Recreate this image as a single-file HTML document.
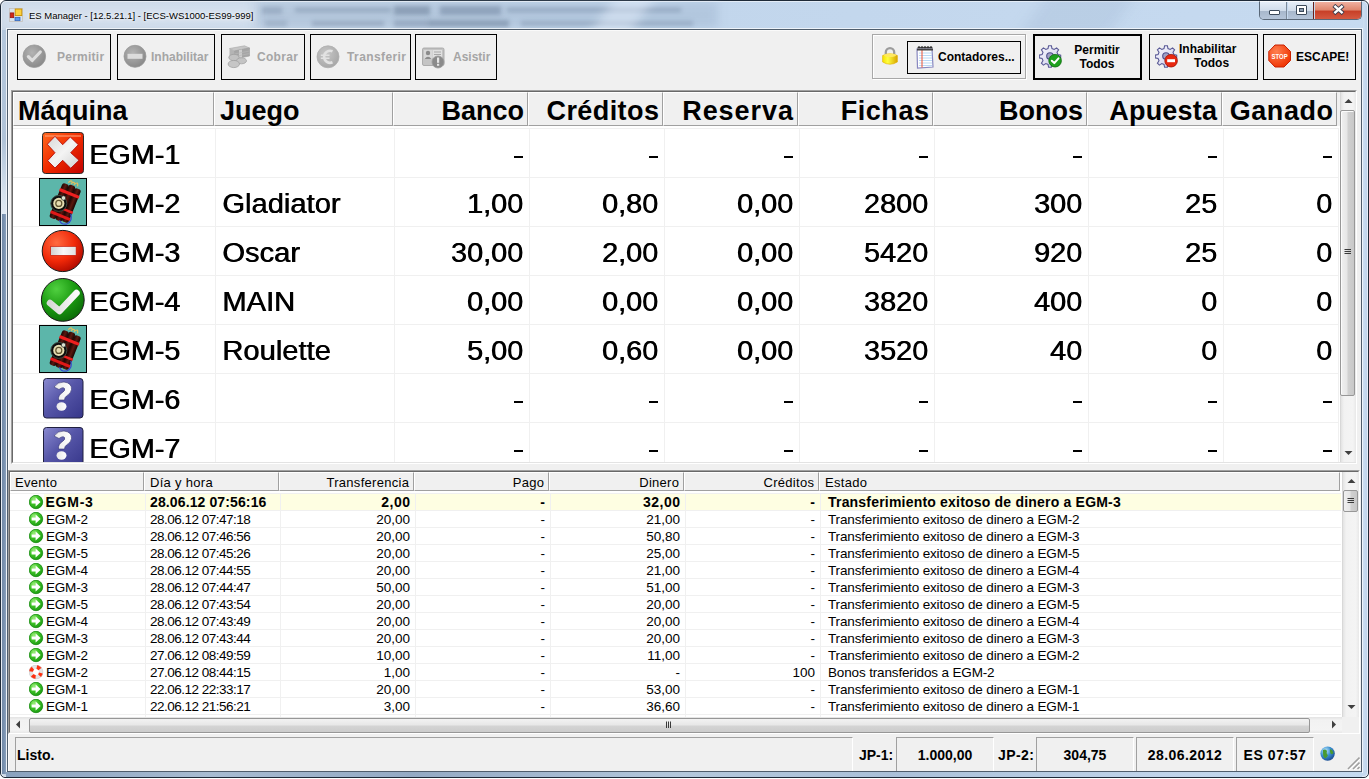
<!DOCTYPE html><html><head><meta charset="utf-8"><title>ES Manager</title><style>
*{margin:0;padding:0;box-sizing:border-box}
html,body{width:1369px;height:779px;overflow:hidden;background:#fff}
body{position:relative;font-family:"Liberation Sans",sans-serif;color:#000}
div,span,svg{position:absolute}
.t{white-space:nowrap;line-height:1}
</style></head><body>
<div style="left:0;top:0;width:1369px;height:778px;border:1px solid #1e2a38;border-radius:6px 6px 5px 5px;background:linear-gradient(90deg,#c8d6e6 0%,#c6d6e8 18%,#c2d6ec 50%,#c6daf0 100%)"></div>
<div style="left:258px;top:2px;width:460px;height:26px;background:rgba(150,172,198,.35);filter:blur(4px)"></div>
<div style="left:262px;top:7px;width:20px;height:7px;background:rgba(50,70,100,0.2);filter:blur(2px)"></div>
<div style="left:295px;top:8px;width:96px;height:4px;background:rgba(50,70,100,0.25);filter:blur(2px)"></div>
<div style="left:394px;top:6px;width:36px;height:9px;background:rgba(50,70,100,0.3);filter:blur(2px)"></div>
<div style="left:440px;top:6px;width:61px;height:9px;background:rgba(50,70,100,0.28);filter:blur(2px)"></div>
<div style="left:507px;top:8px;width:174px;height:4px;background:rgba(50,70,100,0.25);filter:blur(2px)"></div>
<div style="left:265px;top:20px;width:22px;height:7px;background:rgba(50,70,100,0.15);filter:blur(2px)"></div>
<div style="left:312px;top:21px;width:72px;height:5px;background:rgba(50,70,100,0.22);filter:blur(2px)"></div>
<div style="left:394px;top:20px;width:34px;height:7px;background:rgba(50,70,100,0.22);filter:blur(2px)"></div>
<div style="left:428px;top:20px;width:81px;height:7px;background:rgba(50,70,100,0.3);filter:blur(2px)"></div>
<div style="left:521px;top:21px;width:172px;height:5px;background:rgba(50,70,100,0.2);filter:blur(2px)"></div>
<div style="left:1px;top:1px;width:1367px;height:776px;border:1px solid rgba(255,255,255,.55);border-radius:5px 5px 4px 4px;"></div>
<div style="left:6px;top:28px;width:1357px;height:745px;border:1px solid rgba(255,255,255,.7);"></div>
<div style="left:2px;top:30px;width:4px;height:184px;background:linear-gradient(180deg,#b4c7dc 0%,#b0c3d8 60%,#d4e0ec 88%,#e0e9f2 100%);"></div>
<div style="left:2px;top:214px;width:4px;height:560px;background:linear-gradient(90deg,#7088a6,#7c94b2 60%,#8aa2be);"></div>
<div style="left:6px;top:772px;width:1356px;height:5px;background:linear-gradient(90deg,#8aa2be,#a8bcd2 15%,#94aac4 30%,#b4c8dc 50%,#aac0d8 65%,#c0d4ea 85%,#c4daf0 100%);"></div>
<div style="left:1363px;top:6px;width:4px;height:766px;background:linear-gradient(90deg,rgba(255,255,255,.1),rgba(150,175,205,.15));"></div>
<div style="left:2px;top:1px;width:1365px;height:27px;overflow:hidden"><div style="left:600px;top:-10px;width:40px;height:50px;background:rgba(235,245,255,.45);filter:blur(6px);transform:skewX(-35deg)"></div><div style="left:1030px;top:-10px;width:90px;height:50px;background:rgba(150,175,205,.25);filter:blur(8px);transform:skewX(-35deg)"></div><div style="left:0px;top:0px;width:250px;height:27px;background:rgba(235,242,250,.35);filter:blur(6px)"></div></div>
<div style="left:7px;top:29px;width:1355px;height:743px;background:#f0f0f0;border:1px solid #4f5d6c;"></div>
<div style="left:8px;top:30px;width:1353px;height:1px;background:#fafafa"></div>
<div style="left:8px;top:30px;width:1px;height:741px;background:#fafafa"></div>
<svg style="left:9px;top:8px" width="14" height="14" viewBox="0 0 14 14">
<rect x="0.5" y="0.5" width="13" height="13" fill="rgba(220,230,240,.6)" stroke="rgba(190,180,170,.7)" stroke-width="0.8"/>
<rect x="6.2" y="1" width="6.6" height="6.6" fill="#fbd040" stroke="#c89000" stroke-width="0.9"/>
<rect x="1.2" y="4.9" width="3.6" height="4.8" fill="#d02818" stroke="#901010" stroke-width="0.7"/>
<rect x="6" y="9.3" width="5" height="3.4" fill="#5a9af0" stroke="#2a5cb0" stroke-width="0.7"/>
</svg>
<div class="t" style="left:29px;top:11px;font-size:9.5px;color:#000;text-shadow:0 0 6px #fff,0 0 3px #fff">ES Manager - [12.5.21.1] - [ECS-WS1000-ES99-999]</div>
<div style="left:1259px;top:1px;width:103px;height:19px;border:1px solid #5a6878;border-top:1px solid rgba(255,255,255,.8);border-radius:0 0 5px 5px;overflow:hidden">
<div style="left:0;top:0;width:27px;height:19px;background:linear-gradient(180deg,#e6eef8 0%,#d0dcea 45%,#a8b8cc 50%,#b8c8dc 100%);border-right:1px solid #7c8a9a"></div>
<div style="left:28px;top:0;width:26px;height:19px;background:linear-gradient(180deg,#e6eef8 0%,#d0dcea 45%,#a8b8cc 50%,#b8c8dc 100%);border-right:1px solid #6a2018"></div>
<div style="left:55px;top:0;width:47px;height:19px;background:linear-gradient(180deg,#f0b0a0 0%,#e08870 40%,#c84028 50%,#d86048 100%)"></div>
</div>
<div style="left:1269px;top:10px;width:11px;height:5px;background:#fff;border:1px solid #3c4a5a;border-radius:1px"></div>
<div style="left:1296px;top:5px;width:11px;height:10px;background:#fff;border:1px solid #3c4a5a;border-radius:1px"></div>
<div style="left:1299px;top:8px;width:5px;height:4px;background:#8a9aae;border:1px solid #3c4a5a"></div>
<svg style="left:1332px;top:4px" width="14" height="12" viewBox="0 0 14 12">
<path d="M1.8 1.4 L11.2 9.6 M11.2 1.4 L1.8 9.6" stroke="#3c3c4c" stroke-width="4.2" stroke-linecap="butt"/>
<path d="M2.4 1.9 L10.6 9.1 M10.6 1.9 L2.4 9.1" stroke="#fff" stroke-width="2.5" stroke-linecap="butt"/>
</svg>
<div style="left:17px;top:34px;width:94px;height:46px;border:1px solid #000;background:#f0f0f0;"></div>
<div style="left:117px;top:34px;width:98px;height:46px;border:1px solid #000;background:#f0f0f0;"></div>
<div style="left:221px;top:34px;width:84px;height:46px;border:1px solid #000;background:#f0f0f0;"></div>
<div style="left:310px;top:34px;width:101px;height:46px;border:1px solid #000;background:#f0f0f0;"></div>
<div style="left:415px;top:34px;width:82px;height:46px;border:1px solid #000;background:#f0f0f0;"></div>
<div class="t" style="left:57px;top:51px;color:#a5a5a5;font-weight:bold;font-size:12px;letter-spacing:0.25px">Permitir</div>
<div class="t" style="left:151px;top:51px;color:#a5a5a5;font-weight:bold;font-size:12px">Inhabilitar</div>
<div class="t" style="left:257px;top:51px;color:#a5a5a5;font-weight:bold;font-size:12px;letter-spacing:0.3px">Cobrar</div>
<div class="t" style="left:347px;top:51px;color:#a5a5a5;font-weight:bold;font-size:12px;letter-spacing:0.4px">Transferir</div>
<div class="t" style="left:453px;top:51px;color:#a5a5a5;font-weight:bold;font-size:12px">Asistir</div>
<svg style="left:22px;top:44px" width="26" height="26" viewBox="0 0 26 26">
<defs><radialGradient id="gg" cx="40%" cy="35%" r="65%"><stop offset="0" stop-color="#b4b4b4"/><stop offset="1" stop-color="#8a8a8a"/></radialGradient></defs>
<circle cx="12.3" cy="12.2" r="11.3" fill="url(#gg)" stroke="#9a9a9a" stroke-width="0.8"/>
<path d="M6.4 12.6 L10.2 16.5 L18.3 8" fill="none" stroke="#dedede" stroke-width="3.2" stroke-linecap="round" stroke-linejoin="round"/>
</svg>
<svg style="left:123px;top:44px" width="26" height="26" viewBox="0 0 26 26">
<circle cx="12" cy="12.3" r="11" fill="url(#gg)" stroke="#9a9a9a" stroke-width="0.8"/>
<rect x="4.5" y="9.8" width="15" height="5" fill="#dcdcdc"/>
</svg>
<svg style="left:226px;top:44px" width="26" height="26" viewBox="0 0 26 26">
<path d="M3.5 4.5 L18.5 1.8 L23.5 4 L8.5 7 Z" fill="#c6c6c6" stroke="#a8a8a8" stroke-width=".6"/>
<path d="M3.5 4.5 L8.5 7 L8.5 15 L3.5 12.5 Z" fill="#b4b4b4"/>
<path d="M8.5 7 L23.5 4 L23.5 12 L8.5 15 Z" fill="#a6a6a6" stroke="#9c9c9c" stroke-width=".6"/>
<path d="M13 6.1 L16 5.5 L16 13.5 L13 14.1 Z" fill="#cdcdcd"/>
<path d="M8.5 10 L23.5 7 M8.5 12.5 L23.5 9.5" stroke="#b8b8b8" stroke-width=".7"/>
<ellipse cx="8" cy="13.5" rx="5.2" ry="3.2" fill="#c2c2c2" stroke="#a0a0a0" stroke-width=".8"/>
<ellipse cx="15.5" cy="16.8" rx="5" ry="3" fill="#c4c4c4" stroke="#a4a4a4" stroke-width=".8"/>
<ellipse cx="7.8" cy="20" rx="5.7" ry="3.6" fill="#c6c6c6" stroke="#a2a2a2" stroke-width=".8"/>
</svg>
<svg style="left:315px;top:44px" width="26" height="26" viewBox="0 0 26 26">
<defs><radialGradient id="ge" cx="40%" cy="35%" r="65%"><stop offset="0" stop-color="#c8c8c8"/><stop offset="1" stop-color="#a8a8a8"/></radialGradient></defs>
<circle cx="13" cy="12.8" r="11" fill="url(#ge)" stroke="#b0b0b0" stroke-width="0.8"/>
<path d="M17.5 7.3 A6 6 0 1 0 17.5 18.3" fill="none" stroke="#e2e2e2" stroke-width="2.6"/>
<path d="M5.8 11.3 H14.5 M5.8 14.3 H14.5" stroke="#e2e2e2" stroke-width="1.6"/>
</svg>
<svg style="left:420px;top:44px" width="28" height="26" viewBox="0 0 28 26">
<rect x="2.5" y="4" width="21.5" height="17.5" rx="1.5" fill="#c4c4c4" stroke="#a0a0a0" stroke-width="0.8"/>
<rect x="4" y="6" width="8" height="9" fill="#d8d8d8"/>
<circle cx="8" cy="9" r="2.2" fill="#8c8c8c"/>
<path d="M4.5 15 Q8 10.5 11.5 15 Z" fill="#8c8c8c"/>
<rect x="12.5" y="6" width="9.5" height="8" fill="#e0e0e0"/>
<path d="M14 8 H21 M14 10.5 H21" stroke="#a8a8a8" stroke-width="1"/>
<circle cx="18" cy="18" r="6" fill="#8a8a8a" stroke="#9c9c9c" stroke-width="0.8"/>
<rect x="17" y="13.5" width="2.2" height="5.3" fill="#e6e6e6"/>
<rect x="17" y="19.8" width="2.2" height="2" fill="#e6e6e6"/>
</svg>
<div style="left:872px;top:34px;width:154px;height:45px;border:1px solid #a8a8a8;box-shadow:inset 1px 1px 0 #fff, 1px 1px 0 #fff;"></div>
<div style="left:907px;top:41px;width:114px;height:33px;border:1px solid #000;background:#f0f0f0;"></div>
<div class="t" style="left:938px;top:51px;color:#000;font-weight:bold;font-size:12px">Contadores...</div>
<svg style="left:880px;top:45px" width="20" height="22" viewBox="0 0 20 22">
<defs><linearGradient id="lk" x1="0" x2="1"><stop offset="0" stop-color="#f4e000"/><stop offset=".35" stop-color="#ffff40"/><stop offset="1" stop-color="#d8a400"/></linearGradient></defs>
<path d="M5.8 9.5 V7.3 A4.2 4.2 0 0 1 14.2 7.3 V9.5" fill="none" stroke="#9c9c9c" stroke-width="2.3"/>
<path d="M2.6 10.5 Q10 7 17.4 10.5 V17 Q10 21.5 2.6 17 Z" fill="url(#lk)" stroke="#e0b000" stroke-width="0.6"/>
<ellipse cx="10" cy="10.2" rx="6" ry="1.8" fill="#ffe860"/>
</svg>
<svg style="left:915px;top:46px" width="20" height="24" viewBox="0 0 20 24">
<path d="M2 3 L17 3 L18 21 L2.5 22 Z" fill="#fff" stroke="#8888c0" stroke-width="1.2"/>
<path d="M4 7 H17 M4 9.5 H17 M4 12 H17 M4 14.5 H17 M4 17 H17 M4 19.5 H17" stroke="#b8d8f4" stroke-width="1"/>
<path d="M7 4 V21.5" stroke="#f05030" stroke-width="1"/>
<path d="M3 2 Q4 0 5 2 M6 2 Q7 0 8 2 M9 2 Q10 0 11 2 M12 2 Q13 0 14 2 M15 2 Q16 0 17 2" fill="none" stroke="#303030" stroke-width="1.5"/>
<rect x="2" y="2.5" width="16" height="2" fill="#404040"/>
</svg>
<div style="left:1033px;top:34px;width:109px;height:46px;border:2px solid #000;background:#f0f0f0;"></div>
<div style="left:1149px;top:34px;width:109px;height:46px;border:1px solid #000;background:#f0f0f0;"></div>
<div style="left:1263px;top:34px;width:93px;height:46px;border:1px solid #000;background:#f0f0f0;"></div>
<div class="t" style="left:1068px;top:43px;width:58px;text-align:center;color:#000;font-weight:bold;font-size:12px;line-height:14px">Permitir<br>Todos</div>
<div class="t" style="left:1179px;top:43px;color:#000;font-weight:bold;font-size:12px">Inhabilitar</div>
<div class="t" style="left:1194px;top:57px;color:#000;font-weight:bold;font-size:12px">Todos</div>
<div class="t" style="left:1296px;top:51px;color:#000;font-weight:bold;font-size:12px;letter-spacing:0px">ESCAPE!</div>
<svg style="left:1039px;top:45px" width="24" height="24" viewBox="0 0 24 24"><defs><linearGradient id="gr1" x1="0" y1="0" x2="1" y2="1"><stop offset="0" stop-color="#fafaff"/><stop offset=".6" stop-color="#dcdcf0"/><stop offset="1" stop-color="#b0b0d8"/></linearGradient></defs>
<path d="M9.6 0.8 L12.4 0.8 L13 3.6 L15.2 4.5 L17.6 2.9 L19.6 4.9 L18 7.3 L18.9 9.5 L21.7 10.1 L21.7 12.9 L18.9 13.5 L18 15.7 L19.6 18.1 L17.6 20.1 L15.2 18.5 L13 19.4 L12.4 22.2 L9.6 22.2 L9 19.4 L6.8 18.5 L4.4 20.1 L2.4 18.1 L4 15.7 L3.1 13.5 L0.3 12.9 L0.3 10.1 L3.1 9.5 L4 7.3 L2.4 4.9 L4.4 2.9 L6.8 4.5 L9 3.6 Z" fill="url(#gr1)" stroke="#5a5a96" stroke-width="1.1"/>
<circle cx="11" cy="11" r="3.3" fill="#a0a0c4" stroke="#50508c" stroke-width="1.1"/>
<circle cx="16.1" cy="15.7" r="6.3" fill="#1ea01e" stroke="#0a6a0a" stroke-width="0.8"/>
<path d="M12.8 15.8 L15.3 18.1 L19.5 13.3" fill="none" stroke="#fff" stroke-width="2" stroke-linecap="round" stroke-linejoin="round"/>
</svg>
<svg style="left:1155px;top:45px" width="24" height="24" viewBox="0 0 24 24"><defs><linearGradient id="gr2" x1="0" y1="0" x2="1" y2="1"><stop offset="0" stop-color="#fafaff"/><stop offset=".6" stop-color="#dcdcf0"/><stop offset="1" stop-color="#b0b0d8"/></linearGradient></defs>
<path d="M9.6 0.8 L12.4 0.8 L13 3.6 L15.2 4.5 L17.6 2.9 L19.6 4.9 L18 7.3 L18.9 9.5 L21.7 10.1 L21.7 12.9 L18.9 13.5 L18 15.7 L19.6 18.1 L17.6 20.1 L15.2 18.5 L13 19.4 L12.4 22.2 L9.6 22.2 L9 19.4 L6.8 18.5 L4.4 20.1 L2.4 18.1 L4 15.7 L3.1 13.5 L0.3 12.9 L0.3 10.1 L3.1 9.5 L4 7.3 L2.4 4.9 L4.4 2.9 L6.8 4.5 L9 3.6 Z" fill="url(#gr2)" stroke="#5a5a96" stroke-width="1.1"/>
<circle cx="11" cy="11" r="3.3" fill="#a0a0c4" stroke="#50508c" stroke-width="1.1"/>
<circle cx="16.1" cy="15.7" r="6.3" fill="#e82810" stroke="#a01000" stroke-width="0.8"/>
<rect x="12.2" y="14.2" width="7.8" height="3" fill="#fff"/>
</svg>
<svg style="left:1268px;top:44px" width="24" height="24" viewBox="0 0 24 24">
<defs><radialGradient id="st" cx="35%" cy="30%" r="70%"><stop offset="0" stop-color="#ff8050"/><stop offset="1" stop-color="#f03808"/></radialGradient></defs>
<path d="M7 1 H16 L22.5 7.5 V16.5 L16 23 H7 L0.8 16.5 V7.5 Z" fill="url(#st)" stroke="#c82000" stroke-width="1"/>
<text x="11.6" y="15" font-family="Liberation Sans" font-weight="bold" font-size="7.6" fill="#fff" text-anchor="middle" textLength="16" lengthAdjust="spacingAndGlyphs">STOP</text>
</svg>
<div style="left:11px;top:90px;width:1346px;height:374px;background:#fff;border-top:1px solid #a0a0a0;border-left:1px solid #a0a0a0;border-right:1px solid #fff;border-bottom:1px solid #fff;"></div>
<div style="left:12px;top:91px;width:1344px;height:372px;border-top:1px solid #696969;border-left:1px solid #696969;border-right:1px solid #e3e3e3;border-bottom:1px solid #e3e3e3;"></div>
<div style="left:13px;top:92px;width:1327px;height:34px;background:#f0f0f0;"></div>
<div style="left:13px;top:92px;width:201px;height:34px;border-left:1px solid #fff;border-top:1px solid #fff;border-right:1px solid #a0a0a0;border-bottom:1px solid #a0a0a0;"></div>
<div style="left:214px;top:92px;width:179px;height:34px;border-left:1px solid #fff;border-top:1px solid #fff;border-right:1px solid #a0a0a0;border-bottom:1px solid #a0a0a0;"></div>
<div style="left:393px;top:92px;width:135px;height:34px;border-left:1px solid #fff;border-top:1px solid #fff;border-right:1px solid #a0a0a0;border-bottom:1px solid #a0a0a0;"></div>
<div style="left:528px;top:92px;width:135px;height:34px;border-left:1px solid #fff;border-top:1px solid #fff;border-right:1px solid #a0a0a0;border-bottom:1px solid #a0a0a0;"></div>
<div style="left:663px;top:92px;width:135px;height:34px;border-left:1px solid #fff;border-top:1px solid #fff;border-right:1px solid #a0a0a0;border-bottom:1px solid #a0a0a0;"></div>
<div style="left:798px;top:92px;width:135px;height:34px;border-left:1px solid #fff;border-top:1px solid #fff;border-right:1px solid #a0a0a0;border-bottom:1px solid #a0a0a0;"></div>
<div style="left:933px;top:92px;width:154px;height:34px;border-left:1px solid #fff;border-top:1px solid #fff;border-right:1px solid #a0a0a0;border-bottom:1px solid #a0a0a0;"></div>
<div style="left:1087px;top:92px;width:135px;height:34px;border-left:1px solid #fff;border-top:1px solid #fff;border-right:1px solid #a0a0a0;border-bottom:1px solid #a0a0a0;"></div>
<div style="left:1222px;top:92px;width:115px;height:34px;border-left:1px solid #fff;border-top:1px solid #fff;border-right:1px solid #a0a0a0;border-bottom:1px solid #a0a0a0;"></div>
<div class="t" style="left:18px;top:98px;font-weight:bold;font-size:27px">Máquina</div>
<div class="t" style="left:220px;top:98px;font-weight:bold;font-size:27px">Juego</div>
<div class="t" style="left:393px;top:98px;width:131px;text-align:right;font-weight:bold;font-size:27px;letter-spacing:0px">Banco</div>
<div class="t" style="left:528px;top:98px;width:131.43px;text-align:right;font-weight:bold;font-size:27px;letter-spacing:0.43px">Créditos</div>
<div class="t" style="left:663px;top:98px;width:130.95px;text-align:right;font-weight:bold;font-size:27px;letter-spacing:0.95px">Reserva</div>
<div class="t" style="left:798px;top:98px;width:131.55px;text-align:right;font-weight:bold;font-size:27px;letter-spacing:0.55px">Fichas</div>
<div class="t" style="left:933px;top:98px;width:150px;text-align:right;font-weight:bold;font-size:27px;letter-spacing:0px">Bonos</div>
<div class="t" style="left:1087px;top:98px;width:130.2px;text-align:right;font-weight:bold;font-size:27px;letter-spacing:0.2px">Apuesta</div>
<div class="t" style="left:1222px;top:98px;width:111.55px;text-align:right;font-weight:bold;font-size:27px;letter-spacing:0.55px">Ganado</div>
<div style="left:13px;top:128px;width:1325px;height:1px;background:#f0f0f0;"></div>
<div style="left:13px;top:177px;width:1325px;height:1px;background:#f0f0f0;"></div>
<div style="left:13px;top:226px;width:1325px;height:1px;background:#f0f0f0;"></div>
<div style="left:13px;top:275px;width:1325px;height:1px;background:#f0f0f0;"></div>
<div style="left:13px;top:324px;width:1325px;height:1px;background:#f0f0f0;"></div>
<div style="left:13px;top:373px;width:1325px;height:1px;background:#f0f0f0;"></div>
<div style="left:13px;top:422px;width:1325px;height:1px;background:#f0f0f0;"></div>
<div style="left:215px;top:128px;width:1px;height:334px;background:#f0f0f0;"></div>
<div style="left:394px;top:128px;width:1px;height:334px;background:#f0f0f0;"></div>
<div style="left:529px;top:128px;width:1px;height:334px;background:#f0f0f0;"></div>
<div style="left:664px;top:128px;width:1px;height:334px;background:#f0f0f0;"></div>
<div style="left:799px;top:128px;width:1px;height:334px;background:#f0f0f0;"></div>
<div style="left:934px;top:128px;width:1px;height:334px;background:#f0f0f0;"></div>
<div style="left:1088px;top:128px;width:1px;height:334px;background:#f0f0f0;"></div>
<div style="left:1223px;top:128px;width:1px;height:334px;background:#f0f0f0;"></div>
<div style="left:1338px;top:128px;width:1px;height:334px;background:#f0f0f0;"></div>
<div style="left:13px;top:128px;width:1327px;height:334px;overflow:hidden">
<div class="t" style="left:76px;top:14px;font-size:27px;text-shadow:0.6px 0 0 #000;transform:scaleX(1.065);transform-origin:0 0">EGM-1</div>
<div style="left:501px;top:28px;width:9px;height:2px;background:#000;"></div>
<div style="left:636px;top:28px;width:9px;height:2px;background:#000;"></div>
<div style="left:771px;top:28px;width:9px;height:2px;background:#000;"></div>
<div style="left:906px;top:28px;width:9px;height:2px;background:#000;"></div>
<div style="left:1060px;top:28px;width:9px;height:2px;background:#000;"></div>
<div style="left:1195px;top:28px;width:9px;height:2px;background:#000;"></div>
<div style="left:1310px;top:28px;width:9px;height:2px;background:#000;"></div>
<svg style="left:29px;top:0px" width="44" height="49" viewBox="0 0 44 49">
<defs><linearGradient id="xr" x1="0" y1="0" x2="1" y2="1"><stop offset="0" stop-color="#ff6a20"/><stop offset=".5" stop-color="#f02a00"/><stop offset="1" stop-color="#c00000"/></linearGradient>
<linearGradient id="xw" x1="0" y1="0" x2="1" y2="1"><stop offset="0" stop-color="#d8d8d8"/><stop offset=".5" stop-color="#f4f4f4"/><stop offset="1" stop-color="#d0d0d0"/></linearGradient></defs>
<rect x="0.5" y="4.5" width="41" height="41" rx="3" fill="url(#xr)" stroke="#2a2a2a" stroke-width="1"/>
<rect x="3" y="7" width="36" height="2" fill="#ff9a70" opacity=".6"/>
<path d="M5.3 16.3 L13 8.3 L20.7 16.7 L28.3 9 L36.3 16.7 L28.7 24.7 L37 32.3 L28.7 40.3 L20.7 32.3 L13 40 L5.7 32.7 L13 24.7 Z" fill="url(#xw)" stroke="#b00000" stroke-width="0.8"/>
</svg>
<div class="t" style="left:76px;top:63px;font-size:27px;text-shadow:0.6px 0 0 #000;transform:scaleX(1.065);transform-origin:0 0">EGM-2</div>
<div class="t" style="left:209px;top:63px;font-size:27px;text-shadow:0.6px 0 0 #000;transform:scaleX(1.08);transform-origin:0 0">Gladiator</div>
<div class="t" style="left:0px;width:510px;text-align:right;top:63px;font-size:27px;text-shadow:0.6px 0 0 #000;transform:scaleX(1.07);transform-origin:510px 0">1,00</div>
<div class="t" style="left:0px;width:645px;text-align:right;top:63px;font-size:27px;text-shadow:0.6px 0 0 #000;transform:scaleX(1.07);transform-origin:645px 0">0,80</div>
<div class="t" style="left:0px;width:780px;text-align:right;top:63px;font-size:27px;text-shadow:0.6px 0 0 #000;transform:scaleX(1.07);transform-origin:780px 0">0,00</div>
<div class="t" style="left:0px;width:915px;text-align:right;top:63px;font-size:27px;text-shadow:0.6px 0 0 #000;transform:scaleX(1.07);transform-origin:915px 0">2800</div>
<div class="t" style="left:0px;width:1069px;text-align:right;top:63px;font-size:27px;text-shadow:0.6px 0 0 #000;transform:scaleX(1.07);transform-origin:1069px 0">300</div>
<div class="t" style="left:0px;width:1204px;text-align:right;top:63px;font-size:27px;text-shadow:0.6px 0 0 #000;transform:scaleX(1.07);transform-origin:1204px 0">25</div>
<div class="t" style="left:0px;width:1319px;text-align:right;top:63px;font-size:27px;text-shadow:0.6px 0 0 #000;transform:scaleX(1.07);transform-origin:1319px 0">0</div>
<svg style="left:26px;top:49px" width="50" height="49" viewBox="0 0 50 49">
<defs><linearGradient id="dk" x1="0" x2="1"><stop offset="0" stop-color="#1a0402"/><stop offset=".5" stop-color="#5a1810"/><stop offset="1" stop-color="#1a0402"/></linearGradient></defs>
<rect x="0.5" y="1.5" width="47" height="47" fill="#5cb6aa" stroke="#000" stroke-width="1"/>
<g transform="rotate(22 26 27)">
<path d="M21 6 Q23 1 25 5 M27 6 Q30 0 31 6 M24 6 Q26 2 28 5" stroke="#e0c060" stroke-width="1.2" fill="none"/>
<rect x="16" y="8" width="7" height="37" rx="2.5" fill="url(#dk)"/>
<rect x="22.5" y="7" width="7" height="38" rx="2.5" fill="url(#dk)"/>
<rect x="29" y="8" width="7" height="36" rx="2.5" fill="url(#dk)"/>
<rect x="15.5" y="14" width="21" height="3.2" fill="#ee2020"/>
<rect x="15.5" y="31" width="21" height="2.5" fill="#ee2020"/>
<rect x="15.5" y="38" width="21" height="3" fill="#e01818"/>
<path d="M35 34 Q40 40 35 45 Q30 48 27 44" fill="none" stroke="#3848d0" stroke-width="1.2"/>
</g>
<circle cx="19.8" cy="26.4" r="8" fill="#0c0c0c" stroke="#3a4a40" stroke-width="1"/>
<circle cx="19.8" cy="26.4" r="5.6" fill="#e4dcb0"/>
<circle cx="19.8" cy="26.4" r="3" fill="none" stroke="#605430" stroke-width="1.2"/>
<circle cx="24.5" cy="21" r="2.2" fill="#d8e0d0" stroke="#222" stroke-width=".6"/>
</svg>
<div class="t" style="left:76px;top:112px;font-size:27px;text-shadow:0.6px 0 0 #000;transform:scaleX(1.065);transform-origin:0 0">EGM-3</div>
<div class="t" style="left:209px;top:112px;font-size:27px;text-shadow:0.6px 0 0 #000;transform:scaleX(1.08);transform-origin:0 0">Oscar</div>
<div class="t" style="left:0px;width:510px;text-align:right;top:112px;font-size:27px;text-shadow:0.6px 0 0 #000;transform:scaleX(1.07);transform-origin:510px 0">30,00</div>
<div class="t" style="left:0px;width:645px;text-align:right;top:112px;font-size:27px;text-shadow:0.6px 0 0 #000;transform:scaleX(1.07);transform-origin:645px 0">2,00</div>
<div class="t" style="left:0px;width:780px;text-align:right;top:112px;font-size:27px;text-shadow:0.6px 0 0 #000;transform:scaleX(1.07);transform-origin:780px 0">0,00</div>
<div class="t" style="left:0px;width:915px;text-align:right;top:112px;font-size:27px;text-shadow:0.6px 0 0 #000;transform:scaleX(1.07);transform-origin:915px 0">5420</div>
<div class="t" style="left:0px;width:1069px;text-align:right;top:112px;font-size:27px;text-shadow:0.6px 0 0 #000;transform:scaleX(1.07);transform-origin:1069px 0">920</div>
<div class="t" style="left:0px;width:1204px;text-align:right;top:112px;font-size:27px;text-shadow:0.6px 0 0 #000;transform:scaleX(1.07);transform-origin:1204px 0">25</div>
<div class="t" style="left:0px;width:1319px;text-align:right;top:112px;font-size:27px;text-shadow:0.6px 0 0 #000;transform:scaleX(1.07);transform-origin:1319px 0">0</div>
<svg style="left:28px;top:98px" width="44" height="49" viewBox="0 0 44 49">
<defs><radialGradient id="mr" cx="35%" cy="30%" r="75%"><stop offset="0" stop-color="#ff6a40"/><stop offset=".6" stop-color="#f02808"/><stop offset="1" stop-color="#b00a00"/></radialGradient>
<linearGradient id="mw" x1="0" x2="1"><stop offset="0" stop-color="#d0d0d0"/><stop offset=".5" stop-color="#f8f8f8"/><stop offset="1" stop-color="#e0e0e0"/></linearGradient></defs>
<circle cx="21.8" cy="25" r="20.6" fill="url(#mr)" stroke="#1a1a1a" stroke-width="1"/>
<rect x="9.7" y="20.5" width="25.4" height="8.8" fill="url(#mw)" stroke="#c01000" stroke-width="0.6"/>
</svg>
<div class="t" style="left:76px;top:161px;font-size:27px;text-shadow:0.6px 0 0 #000;transform:scaleX(1.065);transform-origin:0 0">EGM-4</div>
<div class="t" style="left:209px;top:161px;font-size:27px;text-shadow:0.6px 0 0 #000;transform:scaleX(1.08);transform-origin:0 0">MAIN</div>
<div class="t" style="left:0px;width:510px;text-align:right;top:161px;font-size:27px;text-shadow:0.6px 0 0 #000;transform:scaleX(1.07);transform-origin:510px 0">0,00</div>
<div class="t" style="left:0px;width:645px;text-align:right;top:161px;font-size:27px;text-shadow:0.6px 0 0 #000;transform:scaleX(1.07);transform-origin:645px 0">0,00</div>
<div class="t" style="left:0px;width:780px;text-align:right;top:161px;font-size:27px;text-shadow:0.6px 0 0 #000;transform:scaleX(1.07);transform-origin:780px 0">0,00</div>
<div class="t" style="left:0px;width:915px;text-align:right;top:161px;font-size:27px;text-shadow:0.6px 0 0 #000;transform:scaleX(1.07);transform-origin:915px 0">3820</div>
<div class="t" style="left:0px;width:1069px;text-align:right;top:161px;font-size:27px;text-shadow:0.6px 0 0 #000;transform:scaleX(1.07);transform-origin:1069px 0">400</div>
<div class="t" style="left:0px;width:1204px;text-align:right;top:161px;font-size:27px;text-shadow:0.6px 0 0 #000;transform:scaleX(1.07);transform-origin:1204px 0">0</div>
<div class="t" style="left:0px;width:1319px;text-align:right;top:161px;font-size:27px;text-shadow:0.6px 0 0 #000;transform:scaleX(1.07);transform-origin:1319px 0">0</div>
<svg style="left:27px;top:147px" width="46" height="49" viewBox="0 0 46 49">
<defs><radialGradient id="cg" cx="35%" cy="25%" r="80%"><stop offset="0" stop-color="#50d040"/><stop offset=".55" stop-color="#1a9a10"/><stop offset="1" stop-color="#0a6a08"/></radialGradient>
<linearGradient id="cw" x1="0" x2="1"><stop offset="0" stop-color="#d8d8d8"/><stop offset="1" stop-color="#fafafa"/></linearGradient></defs>
<circle cx="22.8" cy="24.9" r="21.4" fill="url(#cg)" stroke="#1a1a1a" stroke-width="1"/>
<path d="M10 28 L19.5 36 L36.5 18" fill="none" stroke="url(#cw)" stroke-width="6.5" stroke-linecap="round" stroke-linejoin="round"/>
</svg>
<div class="t" style="left:76px;top:210px;font-size:27px;text-shadow:0.6px 0 0 #000;transform:scaleX(1.065);transform-origin:0 0">EGM-5</div>
<div class="t" style="left:209px;top:210px;font-size:27px;text-shadow:0.6px 0 0 #000;transform:scaleX(1.08);transform-origin:0 0">Roulette</div>
<div class="t" style="left:0px;width:510px;text-align:right;top:210px;font-size:27px;text-shadow:0.6px 0 0 #000;transform:scaleX(1.07);transform-origin:510px 0">5,00</div>
<div class="t" style="left:0px;width:645px;text-align:right;top:210px;font-size:27px;text-shadow:0.6px 0 0 #000;transform:scaleX(1.07);transform-origin:645px 0">0,60</div>
<div class="t" style="left:0px;width:780px;text-align:right;top:210px;font-size:27px;text-shadow:0.6px 0 0 #000;transform:scaleX(1.07);transform-origin:780px 0">0,00</div>
<div class="t" style="left:0px;width:915px;text-align:right;top:210px;font-size:27px;text-shadow:0.6px 0 0 #000;transform:scaleX(1.07);transform-origin:915px 0">3520</div>
<div class="t" style="left:0px;width:1069px;text-align:right;top:210px;font-size:27px;text-shadow:0.6px 0 0 #000;transform:scaleX(1.07);transform-origin:1069px 0">40</div>
<div class="t" style="left:0px;width:1204px;text-align:right;top:210px;font-size:27px;text-shadow:0.6px 0 0 #000;transform:scaleX(1.07);transform-origin:1204px 0">0</div>
<div class="t" style="left:0px;width:1319px;text-align:right;top:210px;font-size:27px;text-shadow:0.6px 0 0 #000;transform:scaleX(1.07);transform-origin:1319px 0">0</div>
<svg style="left:26px;top:196px" width="50" height="49" viewBox="0 0 50 49">
<defs><linearGradient id="dk" x1="0" x2="1"><stop offset="0" stop-color="#1a0402"/><stop offset=".5" stop-color="#5a1810"/><stop offset="1" stop-color="#1a0402"/></linearGradient></defs>
<rect x="0.5" y="1.5" width="47" height="47" fill="#5cb6aa" stroke="#000" stroke-width="1"/>
<g transform="rotate(22 26 27)">
<path d="M21 6 Q23 1 25 5 M27 6 Q30 0 31 6 M24 6 Q26 2 28 5" stroke="#e0c060" stroke-width="1.2" fill="none"/>
<rect x="16" y="8" width="7" height="37" rx="2.5" fill="url(#dk)"/>
<rect x="22.5" y="7" width="7" height="38" rx="2.5" fill="url(#dk)"/>
<rect x="29" y="8" width="7" height="36" rx="2.5" fill="url(#dk)"/>
<rect x="15.5" y="14" width="21" height="3.2" fill="#ee2020"/>
<rect x="15.5" y="31" width="21" height="2.5" fill="#ee2020"/>
<rect x="15.5" y="38" width="21" height="3" fill="#e01818"/>
<path d="M35 34 Q40 40 35 45 Q30 48 27 44" fill="none" stroke="#3848d0" stroke-width="1.2"/>
</g>
<circle cx="19.8" cy="26.4" r="8" fill="#0c0c0c" stroke="#3a4a40" stroke-width="1"/>
<circle cx="19.8" cy="26.4" r="5.6" fill="#e4dcb0"/>
<circle cx="19.8" cy="26.4" r="3" fill="none" stroke="#605430" stroke-width="1.2"/>
<circle cx="24.5" cy="21" r="2.2" fill="#d8e0d0" stroke="#222" stroke-width=".6"/>
</svg>
<div class="t" style="left:76px;top:259px;font-size:27px;text-shadow:0.6px 0 0 #000;transform:scaleX(1.065);transform-origin:0 0">EGM-6</div>
<div style="left:501px;top:273px;width:9px;height:2px;background:#000;"></div>
<div style="left:636px;top:273px;width:9px;height:2px;background:#000;"></div>
<div style="left:771px;top:273px;width:9px;height:2px;background:#000;"></div>
<div style="left:906px;top:273px;width:9px;height:2px;background:#000;"></div>
<div style="left:1060px;top:273px;width:9px;height:2px;background:#000;"></div>
<div style="left:1195px;top:273px;width:9px;height:2px;background:#000;"></div>
<div style="left:1310px;top:273px;width:9px;height:2px;background:#000;"></div>
<svg style="left:29px;top:245px" width="44" height="49" viewBox="0 0 44 49">
<defs><linearGradient id="qb" x1="0" y1="0" x2="1" y2="1"><stop offset="0" stop-color="#8a8ad0"/><stop offset=".45" stop-color="#5656a8"/><stop offset="1" stop-color="#36368a"/></linearGradient>
<linearGradient id="qw" x1="0" x2="1"><stop offset="0" stop-color="#e8e8e8"/><stop offset="1" stop-color="#ffffff"/></linearGradient></defs>
<rect x="1.5" y="5.5" width="39.5" height="39.5" rx="3" fill="url(#qb)" stroke="#202040" stroke-width="1"/>
<path d="M12 14 Q16 8.5 22 9 Q30 10 29.5 16.5 Q29 20.5 24.5 23 Q22.5 24.5 22.5 27 L16.5 27 Q16 22 20.5 19.5 Q23.5 17.5 22.5 15.5 Q21 13.5 17 16.5 Z" fill="url(#qw)" stroke="#303070" stroke-width="0.6"/>
<ellipse cx="19.5" cy="33.5" rx="5" ry="4.2" fill="url(#qw)"/>
</svg>
<div class="t" style="left:76px;top:308px;font-size:27px;text-shadow:0.6px 0 0 #000;transform:scaleX(1.065);transform-origin:0 0">EGM-7</div>
<div style="left:501px;top:322px;width:9px;height:2px;background:#000;"></div>
<div style="left:636px;top:322px;width:9px;height:2px;background:#000;"></div>
<div style="left:771px;top:322px;width:9px;height:2px;background:#000;"></div>
<div style="left:906px;top:322px;width:9px;height:2px;background:#000;"></div>
<div style="left:1060px;top:322px;width:9px;height:2px;background:#000;"></div>
<div style="left:1195px;top:322px;width:9px;height:2px;background:#000;"></div>
<div style="left:1310px;top:322px;width:9px;height:2px;background:#000;"></div>
<svg style="left:29px;top:294px" width="44" height="49" viewBox="0 0 44 49">
<defs><linearGradient id="qb" x1="0" y1="0" x2="1" y2="1"><stop offset="0" stop-color="#8a8ad0"/><stop offset=".45" stop-color="#5656a8"/><stop offset="1" stop-color="#36368a"/></linearGradient>
<linearGradient id="qw" x1="0" x2="1"><stop offset="0" stop-color="#e8e8e8"/><stop offset="1" stop-color="#ffffff"/></linearGradient></defs>
<rect x="1.5" y="5.5" width="39.5" height="39.5" rx="3" fill="url(#qb)" stroke="#202040" stroke-width="1"/>
<path d="M12 14 Q16 8.5 22 9 Q30 10 29.5 16.5 Q29 20.5 24.5 23 Q22.5 24.5 22.5 27 L16.5 27 Q16 22 20.5 19.5 Q23.5 17.5 22.5 15.5 Q21 13.5 17 16.5 Z" fill="url(#qw)" stroke="#303070" stroke-width="0.6"/>
<ellipse cx="19.5" cy="33.5" rx="5" ry="4.2" fill="url(#qw)"/>
</svg>
</div>
<div style="left:1340px;top:92px;width:16px;height:370px;background:linear-gradient(90deg,#e3e3e3 0%,#f2f2f2 20%,#f4f4f4 80%,#e8e8e8 100%);border-left:1px solid #d8d8d8;"></div>
<svg style="left:1344px;top:98px" width="9" height="6" viewBox="0 0 9 6"><path d="M0.5 5 L4.5 1 L8.5 5 Z" fill="#404040"/></svg>
<svg style="left:1344px;top:450px" width="9" height="6" viewBox="0 0 9 6"><path d="M0.5 1 L4.5 5 L8.5 1 Z" fill="#404040"/></svg>
<div style="left:1340px;top:110px;width:15px;height:286px;border:1px solid #979797;border-radius:2px;background:linear-gradient(90deg,#f0f0f0 0%,#e6e6e6 45%,#d0d0d0 55%,#c8c8c8 100%);box-shadow:inset 1px 1px 0 #fbfbfb;"></div>
<svg style="left:1344px;top:248px" width="8" height="8" viewBox="0 0 8 8"><path d="M0.5 1.5 H7 M0.5 3.5 H7 M0.5 5.5 H7" stroke="#3a3a3a" stroke-width="1"/></svg>
<div style="left:8px;top:470px;width:1352px;height:264px;background:#fff;border-top:1px solid #a0a0a0;border-left:1px solid #a0a0a0;border-right:1px solid #fff;border-bottom:1px solid #fff;"></div>
<div style="left:9px;top:471px;width:1350px;height:262px;border-top:1px solid #696969;border-left:1px solid #696969;border-right:1px solid #e3e3e3;border-bottom:1px solid #e3e3e3;"></div>
<div style="left:10px;top:472px;width:1330px;height:19px;background:#f0f0f0;"></div>
<div style="left:10px;top:472px;width:134px;height:19px;border-left:1px solid #fff;border-top:1px solid #fff;border-right:1px solid #a0a0a0;border-bottom:1px solid #a0a0a0;"></div>
<div style="left:144px;top:472px;width:135px;height:19px;border-left:1px solid #fff;border-top:1px solid #fff;border-right:1px solid #a0a0a0;border-bottom:1px solid #a0a0a0;"></div>
<div style="left:279px;top:472px;width:135px;height:19px;border-left:1px solid #fff;border-top:1px solid #fff;border-right:1px solid #a0a0a0;border-bottom:1px solid #a0a0a0;"></div>
<div style="left:414px;top:472px;width:135px;height:19px;border-left:1px solid #fff;border-top:1px solid #fff;border-right:1px solid #a0a0a0;border-bottom:1px solid #a0a0a0;"></div>
<div style="left:549px;top:472px;width:135px;height:19px;border-left:1px solid #fff;border-top:1px solid #fff;border-right:1px solid #a0a0a0;border-bottom:1px solid #a0a0a0;"></div>
<div style="left:684px;top:472px;width:135px;height:19px;border-left:1px solid #fff;border-top:1px solid #fff;border-right:1px solid #a0a0a0;border-bottom:1px solid #a0a0a0;"></div>
<div style="left:819px;top:472px;width:521px;height:19px;border-left:1px solid #fff;border-top:1px solid #fff;border-right:1px solid #a0a0a0;border-bottom:1px solid #a0a0a0;"></div>
<div class="t" style="left:15px;top:476px;font-size:13px;letter-spacing:0.3px">Evento</div>
<div class="t" style="left:150px;top:476px;font-size:13px;letter-spacing:0.3px">Día y hora</div>
<div class="t" style="left:279px;width:130.3px;text-align:right;top:476px;font-size:13px;letter-spacing:0.3px">Transferencia</div>
<div class="t" style="left:414px;width:130.3px;text-align:right;top:476px;font-size:13px;letter-spacing:0.3px">Pago</div>
<div class="t" style="left:549px;width:130.3px;text-align:right;top:476px;font-size:13px;letter-spacing:0.3px">Dinero</div>
<div class="t" style="left:684px;width:130.3px;text-align:right;top:476px;font-size:13px;letter-spacing:0.3px">Créditos</div>
<div class="t" style="left:825px;top:476px;font-size:13px;letter-spacing:0.3px">Estado</div>
<div style="left:44px;top:494px;width:1297px;height:16px;background:#fefee2;"></div>
<div style="left:10px;top:493px;width:1331px;height:1px;background:#f0f0f0;"></div>
<div style="left:10px;top:510px;width:1331px;height:1px;background:#f0f0f0;"></div>
<div style="left:10px;top:527px;width:1331px;height:1px;background:#f0f0f0;"></div>
<div style="left:10px;top:544px;width:1331px;height:1px;background:#f0f0f0;"></div>
<div style="left:10px;top:561px;width:1331px;height:1px;background:#f0f0f0;"></div>
<div style="left:10px;top:578px;width:1331px;height:1px;background:#f0f0f0;"></div>
<div style="left:10px;top:595px;width:1331px;height:1px;background:#f0f0f0;"></div>
<div style="left:10px;top:612px;width:1331px;height:1px;background:#f0f0f0;"></div>
<div style="left:10px;top:629px;width:1331px;height:1px;background:#f0f0f0;"></div>
<div style="left:10px;top:646px;width:1331px;height:1px;background:#f0f0f0;"></div>
<div style="left:10px;top:663px;width:1331px;height:1px;background:#f0f0f0;"></div>
<div style="left:10px;top:680px;width:1331px;height:1px;background:#f0f0f0;"></div>
<div style="left:10px;top:697px;width:1331px;height:1px;background:#f0f0f0;"></div>
<div style="left:10px;top:714px;width:1331px;height:1px;background:#f0f0f0;"></div>
<div style="left:145px;top:493px;width:1px;height:224px;background:#f0f0f0;"></div>
<div style="left:280px;top:493px;width:1px;height:224px;background:#f0f0f0;"></div>
<div style="left:415px;top:493px;width:1px;height:224px;background:#f0f0f0;"></div>
<div style="left:550px;top:493px;width:1px;height:224px;background:#f0f0f0;"></div>
<div style="left:685px;top:493px;width:1px;height:224px;background:#f0f0f0;"></div>
<div style="left:820px;top:493px;width:1px;height:224px;background:#f0f0f0;"></div>
<svg style="left:29px;top:495px" width="15" height="15" viewBox="0 0 15 15">
<defs><radialGradient id="ag" cx="35%" cy="30%" r="75%"><stop offset="0" stop-color="#a0f080"/><stop offset=".45" stop-color="#40c428"/><stop offset="1" stop-color="#1a9a10"/></radialGradient></defs>
<circle cx="7" cy="7" r="6.7" fill="url(#ag)" stroke="#148a0c" stroke-width=".8"/>
<path d="M2.6 5.6 H6.6 V2.4 L11.6 7 L6.6 11.6 V8.4 H2.6 Z" fill="#fff"/>
</svg>
<div class="t" style="left:45.5px;top:495px;font-size:14px;font-weight:bold;letter-spacing:0.75px">EGM-3</div>
<div class="t" style="left:150px;top:495px;font-size:14px;font-weight:bold;letter-spacing:0.12px">28.06.12 07:56:16</div>
<div class="t" style="left:285px;width:125.5px;text-align:right;top:495px;font-size:14px;font-weight:bold;letter-spacing:0.5px">2,00</div>
<div class="t" style="left:420px;width:125.5px;text-align:right;top:495px;font-size:14px;font-weight:bold;letter-spacing:0.5px">-</div>
<div class="t" style="left:555px;width:125.5px;text-align:right;top:495px;font-size:14px;font-weight:bold;letter-spacing:0.5px">32,00</div>
<div class="t" style="left:690px;width:125.5px;text-align:right;top:495px;font-size:14px;font-weight:bold;letter-spacing:0.5px">-</div>
<div class="t" style="left:828px;top:495px;font-size:14px;font-weight:bold;letter-spacing:0.2px">Transferimiento exitoso de dinero a EGM-3</div>
<svg style="left:29px;top:512px" width="15" height="15" viewBox="0 0 15 15">
<defs><radialGradient id="ag" cx="35%" cy="30%" r="75%"><stop offset="0" stop-color="#a0f080"/><stop offset=".45" stop-color="#40c428"/><stop offset="1" stop-color="#1a9a10"/></radialGradient></defs>
<circle cx="7" cy="7" r="6.7" fill="url(#ag)" stroke="#148a0c" stroke-width=".8"/>
<path d="M2.6 5.6 H6.6 V2.4 L11.6 7 L6.6 11.6 V8.4 H2.6 Z" fill="#fff"/>
</svg>
<div class="t" style="left:46px;top:512.5px;font-size:13.5px;letter-spacing:-0.2px">EGM-2</div>
<div class="t" style="left:150px;top:512.5px;font-size:13.5px;letter-spacing:-0.5px">28.06.12 07:47:18</div>
<div class="t" style="left:285px;width:125px;text-align:right;top:512.5px;font-size:13.5px;letter-spacing:0px">20,00</div>
<div class="t" style="left:420px;width:125px;text-align:right;top:512.5px;font-size:13.5px;letter-spacing:0px">-</div>
<div class="t" style="left:555px;width:125px;text-align:right;top:512.5px;font-size:13.5px;letter-spacing:0px">21,00</div>
<div class="t" style="left:690px;width:125px;text-align:right;top:512.5px;font-size:13.5px;letter-spacing:0px">-</div>
<div class="t" style="left:828px;top:512.5px;font-size:13.5px;letter-spacing:-0.15px">Transferimiento exitoso de dinero a EGM-2</div>
<svg style="left:29px;top:529px" width="15" height="15" viewBox="0 0 15 15">
<defs><radialGradient id="ag" cx="35%" cy="30%" r="75%"><stop offset="0" stop-color="#a0f080"/><stop offset=".45" stop-color="#40c428"/><stop offset="1" stop-color="#1a9a10"/></radialGradient></defs>
<circle cx="7" cy="7" r="6.7" fill="url(#ag)" stroke="#148a0c" stroke-width=".8"/>
<path d="M2.6 5.6 H6.6 V2.4 L11.6 7 L6.6 11.6 V8.4 H2.6 Z" fill="#fff"/>
</svg>
<div class="t" style="left:46px;top:529.5px;font-size:13.5px;letter-spacing:-0.2px">EGM-3</div>
<div class="t" style="left:150px;top:529.5px;font-size:13.5px;letter-spacing:-0.5px">28.06.12 07:46:56</div>
<div class="t" style="left:285px;width:125px;text-align:right;top:529.5px;font-size:13.5px;letter-spacing:0px">20,00</div>
<div class="t" style="left:420px;width:125px;text-align:right;top:529.5px;font-size:13.5px;letter-spacing:0px">-</div>
<div class="t" style="left:555px;width:125px;text-align:right;top:529.5px;font-size:13.5px;letter-spacing:0px">50,80</div>
<div class="t" style="left:690px;width:125px;text-align:right;top:529.5px;font-size:13.5px;letter-spacing:0px">-</div>
<div class="t" style="left:828px;top:529.5px;font-size:13.5px;letter-spacing:-0.15px">Transferimiento exitoso de dinero a EGM-3</div>
<svg style="left:29px;top:546px" width="15" height="15" viewBox="0 0 15 15">
<defs><radialGradient id="ag" cx="35%" cy="30%" r="75%"><stop offset="0" stop-color="#a0f080"/><stop offset=".45" stop-color="#40c428"/><stop offset="1" stop-color="#1a9a10"/></radialGradient></defs>
<circle cx="7" cy="7" r="6.7" fill="url(#ag)" stroke="#148a0c" stroke-width=".8"/>
<path d="M2.6 5.6 H6.6 V2.4 L11.6 7 L6.6 11.6 V8.4 H2.6 Z" fill="#fff"/>
</svg>
<div class="t" style="left:46px;top:546.5px;font-size:13.5px;letter-spacing:-0.2px">EGM-5</div>
<div class="t" style="left:150px;top:546.5px;font-size:13.5px;letter-spacing:-0.5px">28.06.12 07:45:26</div>
<div class="t" style="left:285px;width:125px;text-align:right;top:546.5px;font-size:13.5px;letter-spacing:0px">20,00</div>
<div class="t" style="left:420px;width:125px;text-align:right;top:546.5px;font-size:13.5px;letter-spacing:0px">-</div>
<div class="t" style="left:555px;width:125px;text-align:right;top:546.5px;font-size:13.5px;letter-spacing:0px">25,00</div>
<div class="t" style="left:690px;width:125px;text-align:right;top:546.5px;font-size:13.5px;letter-spacing:0px">-</div>
<div class="t" style="left:828px;top:546.5px;font-size:13.5px;letter-spacing:-0.15px">Transferimiento exitoso de dinero a EGM-5</div>
<svg style="left:29px;top:563px" width="15" height="15" viewBox="0 0 15 15">
<defs><radialGradient id="ag" cx="35%" cy="30%" r="75%"><stop offset="0" stop-color="#a0f080"/><stop offset=".45" stop-color="#40c428"/><stop offset="1" stop-color="#1a9a10"/></radialGradient></defs>
<circle cx="7" cy="7" r="6.7" fill="url(#ag)" stroke="#148a0c" stroke-width=".8"/>
<path d="M2.6 5.6 H6.6 V2.4 L11.6 7 L6.6 11.6 V8.4 H2.6 Z" fill="#fff"/>
</svg>
<div class="t" style="left:46px;top:563.5px;font-size:13.5px;letter-spacing:-0.2px">EGM-4</div>
<div class="t" style="left:150px;top:563.5px;font-size:13.5px;letter-spacing:-0.5px">28.06.12 07:44:55</div>
<div class="t" style="left:285px;width:125px;text-align:right;top:563.5px;font-size:13.5px;letter-spacing:0px">20,00</div>
<div class="t" style="left:420px;width:125px;text-align:right;top:563.5px;font-size:13.5px;letter-spacing:0px">-</div>
<div class="t" style="left:555px;width:125px;text-align:right;top:563.5px;font-size:13.5px;letter-spacing:0px">21,00</div>
<div class="t" style="left:690px;width:125px;text-align:right;top:563.5px;font-size:13.5px;letter-spacing:0px">-</div>
<div class="t" style="left:828px;top:563.5px;font-size:13.5px;letter-spacing:-0.15px">Transferimiento exitoso de dinero a EGM-4</div>
<svg style="left:29px;top:580px" width="15" height="15" viewBox="0 0 15 15">
<defs><radialGradient id="ag" cx="35%" cy="30%" r="75%"><stop offset="0" stop-color="#a0f080"/><stop offset=".45" stop-color="#40c428"/><stop offset="1" stop-color="#1a9a10"/></radialGradient></defs>
<circle cx="7" cy="7" r="6.7" fill="url(#ag)" stroke="#148a0c" stroke-width=".8"/>
<path d="M2.6 5.6 H6.6 V2.4 L11.6 7 L6.6 11.6 V8.4 H2.6 Z" fill="#fff"/>
</svg>
<div class="t" style="left:46px;top:580.5px;font-size:13.5px;letter-spacing:-0.2px">EGM-3</div>
<div class="t" style="left:150px;top:580.5px;font-size:13.5px;letter-spacing:-0.5px">28.06.12 07:44:47</div>
<div class="t" style="left:285px;width:125px;text-align:right;top:580.5px;font-size:13.5px;letter-spacing:0px">50,00</div>
<div class="t" style="left:420px;width:125px;text-align:right;top:580.5px;font-size:13.5px;letter-spacing:0px">-</div>
<div class="t" style="left:555px;width:125px;text-align:right;top:580.5px;font-size:13.5px;letter-spacing:0px">51,00</div>
<div class="t" style="left:690px;width:125px;text-align:right;top:580.5px;font-size:13.5px;letter-spacing:0px">-</div>
<div class="t" style="left:828px;top:580.5px;font-size:13.5px;letter-spacing:-0.15px">Transferimiento exitoso de dinero a EGM-3</div>
<svg style="left:29px;top:597px" width="15" height="15" viewBox="0 0 15 15">
<defs><radialGradient id="ag" cx="35%" cy="30%" r="75%"><stop offset="0" stop-color="#a0f080"/><stop offset=".45" stop-color="#40c428"/><stop offset="1" stop-color="#1a9a10"/></radialGradient></defs>
<circle cx="7" cy="7" r="6.7" fill="url(#ag)" stroke="#148a0c" stroke-width=".8"/>
<path d="M2.6 5.6 H6.6 V2.4 L11.6 7 L6.6 11.6 V8.4 H2.6 Z" fill="#fff"/>
</svg>
<div class="t" style="left:46px;top:597.5px;font-size:13.5px;letter-spacing:-0.2px">EGM-5</div>
<div class="t" style="left:150px;top:597.5px;font-size:13.5px;letter-spacing:-0.5px">28.06.12 07:43:54</div>
<div class="t" style="left:285px;width:125px;text-align:right;top:597.5px;font-size:13.5px;letter-spacing:0px">20,00</div>
<div class="t" style="left:420px;width:125px;text-align:right;top:597.5px;font-size:13.5px;letter-spacing:0px">-</div>
<div class="t" style="left:555px;width:125px;text-align:right;top:597.5px;font-size:13.5px;letter-spacing:0px">20,00</div>
<div class="t" style="left:690px;width:125px;text-align:right;top:597.5px;font-size:13.5px;letter-spacing:0px">-</div>
<div class="t" style="left:828px;top:597.5px;font-size:13.5px;letter-spacing:-0.15px">Transferimiento exitoso de dinero a EGM-5</div>
<svg style="left:29px;top:614px" width="15" height="15" viewBox="0 0 15 15">
<defs><radialGradient id="ag" cx="35%" cy="30%" r="75%"><stop offset="0" stop-color="#a0f080"/><stop offset=".45" stop-color="#40c428"/><stop offset="1" stop-color="#1a9a10"/></radialGradient></defs>
<circle cx="7" cy="7" r="6.7" fill="url(#ag)" stroke="#148a0c" stroke-width=".8"/>
<path d="M2.6 5.6 H6.6 V2.4 L11.6 7 L6.6 11.6 V8.4 H2.6 Z" fill="#fff"/>
</svg>
<div class="t" style="left:46px;top:614.5px;font-size:13.5px;letter-spacing:-0.2px">EGM-4</div>
<div class="t" style="left:150px;top:614.5px;font-size:13.5px;letter-spacing:-0.5px">28.06.12 07:43:49</div>
<div class="t" style="left:285px;width:125px;text-align:right;top:614.5px;font-size:13.5px;letter-spacing:0px">20,00</div>
<div class="t" style="left:420px;width:125px;text-align:right;top:614.5px;font-size:13.5px;letter-spacing:0px">-</div>
<div class="t" style="left:555px;width:125px;text-align:right;top:614.5px;font-size:13.5px;letter-spacing:0px">20,00</div>
<div class="t" style="left:690px;width:125px;text-align:right;top:614.5px;font-size:13.5px;letter-spacing:0px">-</div>
<div class="t" style="left:828px;top:614.5px;font-size:13.5px;letter-spacing:-0.15px">Transferimiento exitoso de dinero a EGM-4</div>
<svg style="left:29px;top:631px" width="15" height="15" viewBox="0 0 15 15">
<defs><radialGradient id="ag" cx="35%" cy="30%" r="75%"><stop offset="0" stop-color="#a0f080"/><stop offset=".45" stop-color="#40c428"/><stop offset="1" stop-color="#1a9a10"/></radialGradient></defs>
<circle cx="7" cy="7" r="6.7" fill="url(#ag)" stroke="#148a0c" stroke-width=".8"/>
<path d="M2.6 5.6 H6.6 V2.4 L11.6 7 L6.6 11.6 V8.4 H2.6 Z" fill="#fff"/>
</svg>
<div class="t" style="left:46px;top:631.5px;font-size:13.5px;letter-spacing:-0.2px">EGM-3</div>
<div class="t" style="left:150px;top:631.5px;font-size:13.5px;letter-spacing:-0.5px">28.06.12 07:43:44</div>
<div class="t" style="left:285px;width:125px;text-align:right;top:631.5px;font-size:13.5px;letter-spacing:0px">20,00</div>
<div class="t" style="left:420px;width:125px;text-align:right;top:631.5px;font-size:13.5px;letter-spacing:0px">-</div>
<div class="t" style="left:555px;width:125px;text-align:right;top:631.5px;font-size:13.5px;letter-spacing:0px">20,00</div>
<div class="t" style="left:690px;width:125px;text-align:right;top:631.5px;font-size:13.5px;letter-spacing:0px">-</div>
<div class="t" style="left:828px;top:631.5px;font-size:13.5px;letter-spacing:-0.15px">Transferimiento exitoso de dinero a EGM-3</div>
<svg style="left:29px;top:648px" width="15" height="15" viewBox="0 0 15 15">
<defs><radialGradient id="ag" cx="35%" cy="30%" r="75%"><stop offset="0" stop-color="#a0f080"/><stop offset=".45" stop-color="#40c428"/><stop offset="1" stop-color="#1a9a10"/></radialGradient></defs>
<circle cx="7" cy="7" r="6.7" fill="url(#ag)" stroke="#148a0c" stroke-width=".8"/>
<path d="M2.6 5.6 H6.6 V2.4 L11.6 7 L6.6 11.6 V8.4 H2.6 Z" fill="#fff"/>
</svg>
<div class="t" style="left:46px;top:648.5px;font-size:13.5px;letter-spacing:-0.2px">EGM-2</div>
<div class="t" style="left:150px;top:648.5px;font-size:13.5px;letter-spacing:-0.5px">27.06.12 08:49:59</div>
<div class="t" style="left:285px;width:125px;text-align:right;top:648.5px;font-size:13.5px;letter-spacing:0px">10,00</div>
<div class="t" style="left:420px;width:125px;text-align:right;top:648.5px;font-size:13.5px;letter-spacing:0px">-</div>
<div class="t" style="left:555px;width:125px;text-align:right;top:648.5px;font-size:13.5px;letter-spacing:0px">11,00</div>
<div class="t" style="left:690px;width:125px;text-align:right;top:648.5px;font-size:13.5px;letter-spacing:0px">-</div>
<div class="t" style="left:828px;top:648.5px;font-size:13.5px;letter-spacing:-0.15px">Transferimiento exitoso de dinero a EGM-2</div>
<svg style="left:29px;top:665px" width="15" height="15" viewBox="0 0 15 15">
<circle cx="7" cy="7" r="5" fill="none" stroke="#e4e4e4" stroke-width="4"/>
<circle cx="7" cy="7" r="5" fill="none" stroke="#ff3010" stroke-width="4" stroke-dasharray="3.9 3.95" stroke-dashoffset="2" transform="rotate(25 7 7)"/>
<circle cx="7" cy="7" r="6.9" fill="none" stroke="#b8b8b8" stroke-width=".4"/>
</svg>
<div class="t" style="left:46px;top:665.5px;font-size:13.5px;letter-spacing:-0.2px">EGM-2</div>
<div class="t" style="left:150px;top:665.5px;font-size:13.5px;letter-spacing:-0.5px">27.06.12 08:44:15</div>
<div class="t" style="left:285px;width:125px;text-align:right;top:665.5px;font-size:13.5px;letter-spacing:0px">1,00</div>
<div class="t" style="left:420px;width:125px;text-align:right;top:665.5px;font-size:13.5px;letter-spacing:0px">-</div>
<div class="t" style="left:555px;width:125px;text-align:right;top:665.5px;font-size:13.5px;letter-spacing:0px">-</div>
<div class="t" style="left:690px;width:125px;text-align:right;top:665.5px;font-size:13.5px;letter-spacing:0px">100</div>
<div class="t" style="left:828px;top:665.5px;font-size:13.5px;letter-spacing:-0.15px">Bonos transferidos a EGM-2</div>
<svg style="left:29px;top:682px" width="15" height="15" viewBox="0 0 15 15">
<defs><radialGradient id="ag" cx="35%" cy="30%" r="75%"><stop offset="0" stop-color="#a0f080"/><stop offset=".45" stop-color="#40c428"/><stop offset="1" stop-color="#1a9a10"/></radialGradient></defs>
<circle cx="7" cy="7" r="6.7" fill="url(#ag)" stroke="#148a0c" stroke-width=".8"/>
<path d="M2.6 5.6 H6.6 V2.4 L11.6 7 L6.6 11.6 V8.4 H2.6 Z" fill="#fff"/>
</svg>
<div class="t" style="left:46px;top:682.5px;font-size:13.5px;letter-spacing:-0.2px">EGM-1</div>
<div class="t" style="left:150px;top:682.5px;font-size:13.5px;letter-spacing:-0.5px">22.06.12 22:33:17</div>
<div class="t" style="left:285px;width:125px;text-align:right;top:682.5px;font-size:13.5px;letter-spacing:0px">20,00</div>
<div class="t" style="left:420px;width:125px;text-align:right;top:682.5px;font-size:13.5px;letter-spacing:0px">-</div>
<div class="t" style="left:555px;width:125px;text-align:right;top:682.5px;font-size:13.5px;letter-spacing:0px">53,00</div>
<div class="t" style="left:690px;width:125px;text-align:right;top:682.5px;font-size:13.5px;letter-spacing:0px">-</div>
<div class="t" style="left:828px;top:682.5px;font-size:13.5px;letter-spacing:-0.15px">Transferimiento exitoso de dinero a EGM-1</div>
<svg style="left:29px;top:699px" width="15" height="15" viewBox="0 0 15 15">
<defs><radialGradient id="ag" cx="35%" cy="30%" r="75%"><stop offset="0" stop-color="#a0f080"/><stop offset=".45" stop-color="#40c428"/><stop offset="1" stop-color="#1a9a10"/></radialGradient></defs>
<circle cx="7" cy="7" r="6.7" fill="url(#ag)" stroke="#148a0c" stroke-width=".8"/>
<path d="M2.6 5.6 H6.6 V2.4 L11.6 7 L6.6 11.6 V8.4 H2.6 Z" fill="#fff"/>
</svg>
<div class="t" style="left:46px;top:699.5px;font-size:13.5px;letter-spacing:-0.2px">EGM-1</div>
<div class="t" style="left:150px;top:699.5px;font-size:13.5px;letter-spacing:-0.5px">22.06.12 21:56:21</div>
<div class="t" style="left:285px;width:125px;text-align:right;top:699.5px;font-size:13.5px;letter-spacing:0px">3,00</div>
<div class="t" style="left:420px;width:125px;text-align:right;top:699.5px;font-size:13.5px;letter-spacing:0px">-</div>
<div class="t" style="left:555px;width:125px;text-align:right;top:699.5px;font-size:13.5px;letter-spacing:0px">36,60</div>
<div class="t" style="left:690px;width:125px;text-align:right;top:699.5px;font-size:13.5px;letter-spacing:0px">-</div>
<div class="t" style="left:828px;top:699.5px;font-size:13.5px;letter-spacing:-0.15px">Transferimiento exitoso de dinero a EGM-1</div>
<div style="left:1342px;top:472px;width:17px;height:245px;background:linear-gradient(90deg,#e3e3e3 0%,#f2f2f2 20%,#f4f4f4 80%,#e8e8e8 100%);border-left:1px solid #d8d8d8;"></div>
<svg style="left:1347px;top:478px" width="9" height="6" viewBox="0 0 9 6"><path d="M0.5 5 L4.5 1 L8.5 5 Z" fill="#404040"/></svg>
<svg style="left:1347px;top:704px" width="9" height="6" viewBox="0 0 9 6"><path d="M0.5 1 L4.5 5 L8.5 1 Z" fill="#404040"/></svg>
<div style="left:1343px;top:490px;width:15px;height:22px;border:1px solid #979797;border-radius:2px;background:linear-gradient(90deg,#f0f0f0 0%,#e6e6e6 45%,#d0d0d0 55%,#c8c8c8 100%);"></div>
<svg style="left:1347px;top:497px" width="8" height="8" viewBox="0 0 8 8"><path d="M0.5 1.5 H7 M0.5 3.5 H7 M0.5 5.5 H7" stroke="#3a3a3a" stroke-width="1"/></svg>
<div style="left:10px;top:717px;width:1332px;height:16px;background:linear-gradient(180deg,#e3e3e3 0%,#f2f2f2 20%,#f4f4f4 80%,#e8e8e8 100%);"></div>
<div style="left:1342px;top:717px;width:17px;height:16px;background:#f0f0f0;"></div>
<svg style="left:15px;top:720px" width="6" height="9" viewBox="0 0 6 9"><path d="M5 0.5 L1 4.5 L5 8.5 Z" fill="#404040"/></svg>
<svg style="left:1331px;top:720px" width="6" height="9" viewBox="0 0 6 9"><path d="M1 0.5 L5 4.5 L1 8.5 Z" fill="#404040"/></svg>
<div style="left:29px;top:718px;width:1281px;height:15px;border:1px solid #979797;border-radius:2px;background:linear-gradient(180deg,#f2f2f2 0%,#e8e8e8 45%,#d4d4d4 55%,#cccccc 100%);"></div>
<svg style="left:665px;top:721px" width="8" height="8" viewBox="0 0 8 8"><path d="M1.5 0.5 V7 M3.5 0.5 V7 M5.5 0.5 V7" stroke="#3a3a3a" stroke-width="1"/></svg>
<div style="left:15px;top:737px;width:838px;height:34px;border-left:1px solid #a0a0a0;border-top:1px solid #a0a0a0;border-right:1px solid #fff;"></div>
<div class="t" style="left:17px;top:748px;font-weight:bold;font-size:14px">Listo.</div>
<div class="t" style="left:859px;top:748px;font-weight:bold;font-size:14px">JP-1:</div>
<div style="left:896px;top:737px;width:98px;height:34px;border-left:1px solid #a0a0a0;border-top:1px solid #a0a0a0;border-right:1px solid #fff;"></div>
<div class="t" style="left:896px;width:98px;text-align:center;top:748px;font-weight:bold;font-size:14px">1.000,00</div>
<div class="t" style="left:998px;top:748px;font-weight:bold;font-size:14px;letter-spacing:0.4px">JP-2:</div>
<div style="left:1036px;top:737px;width:98px;height:34px;border-left:1px solid #a0a0a0;border-top:1px solid #a0a0a0;border-right:1px solid #fff;"></div>
<div class="t" style="left:1036px;width:98px;text-align:center;top:748px;font-weight:bold;font-size:14px">304,75</div>
<div style="left:1136px;top:737px;width:98px;height:34px;border-left:1px solid #a0a0a0;border-top:1px solid #a0a0a0;border-right:1px solid #fff;"></div>
<div class="t" style="left:1136px;width:98px;text-align:center;top:748px;font-weight:bold;font-size:14px;letter-spacing:0.45px">28.06.2012</div>
<div style="left:1236px;top:737px;width:78px;height:34px;border-left:1px solid #a0a0a0;border-top:1px solid #a0a0a0;border-right:1px solid #fff;"></div>
<div class="t" style="left:1236px;width:78px;text-align:center;top:748px;font-weight:bold;font-size:14px;letter-spacing:0.55px">ES 07:57</div>
<svg style="left:1320px;top:746px" width="16" height="16" viewBox="0 0 16 16">
<defs><radialGradient id="gl" cx="35%" cy="30%" r="75%"><stop offset="0" stop-color="#c0e8ff"/><stop offset=".5" stop-color="#3a90d0"/><stop offset="1" stop-color="#1a4a90"/></radialGradient></defs>
<circle cx="7.6" cy="7.6" r="7.2" fill="url(#gl)"/>
<path d="M3 4 Q6 2.5 7 5 Q6 8 8 9 Q7 12 5 12.5 Q2.5 10 3 7 Z M10 3 Q13 4 13.5 7 Q12 9 10.5 7.5 Q9.5 5 10 3 Z" fill="#4a9a30"/>
</svg>
<svg style="left:1346px;top:756px" width="14" height="14" viewBox="0 0 14 14">
<path d="M13.5 1.5 L2 13 M13.5 6.5 L7 13 M13.5 11 L11.5 13" stroke="#fff" stroke-width="1.6" transform="translate(0.8 0.8)"/>
<path d="M13.5 1.5 L2 13 M13.5 6.5 L7 13 M13.5 11 L11.5 13" stroke="#a0a0a0" stroke-width="1.6"/>
</svg>
</body></html>
